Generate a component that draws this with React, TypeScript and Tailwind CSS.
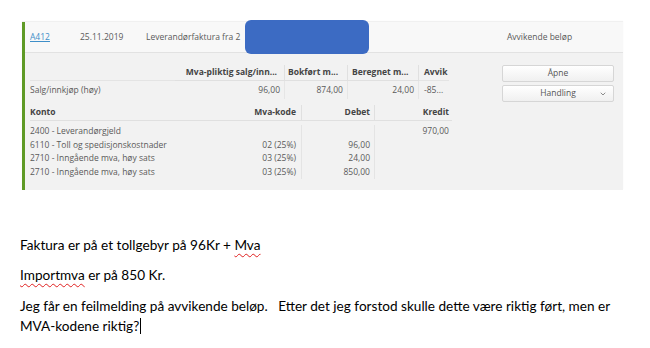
import { ChevronDown } from "lucide-react";

const postings = [
  { konto: "2400 - Leverandørgjeld", kode: "", debet: "", kredit: "970,00" },
  { konto: "6110 - Toll og spedisjonskostnader", kode: "02 (25%)", debet: "96,00", kredit: "" },
  { konto: "2710 - Inngående mva, høy sats", kode: "03 (25%)", debet: "24,00", kredit: "" },
  { konto: "2710 - Inngående mva, høy sats", kode: "03 (25%)", debet: "850,00", kredit: "" },
];

function Squiggle({ children }: { children: React.ReactNode }) {
  return (
    <span className="underline decoration-wavy decoration-[#e02020] decoration-1 underline-offset-[3px]">
      {children}
    </span>
  );
}

export default function App() {
  return (
    <div className="h-[348px] w-[650px] bg-white">
      {/* Voucher panel */}
      <div className="ml-[22px] pt-[22px]">
        <div className="relative flex h-[168px] w-[601px] flex-col border-l-[3px] border-[#5f9a26] bg-[#f2f2f2] font-['Open_Sans',sans-serif] text-[8.5px] text-[#5a5a5a] shadow-[0_-1px_1px_rgba(0,0,0,0.06)]">
          {/* Header row */}
          <div className="flex h-[31px] shrink-0 items-center border-b border-[#e2e2e2] bg-[#f8f8f8] pl-[5px]">
            <span className="w-[50px] text-[#3f8fc9] underline">A412</span>
            <span className="w-[66px]">25.11.2019</span>
            <span className="flex-1">Leverandørfaktura fra 2 </span>
            <span className="w-[116px]">Avvikende beløp</span>
          </div>
          {/* redaction box */}
          <div className="absolute left-[220px] top-[-2px] h-[34px] w-[124px] rounded-[6px] bg-[#3c6bc3]" />

          {/* Body */}
          <div className="flex flex-1 pl-[5px] pt-[12px]">
            <div className="flex flex-col">
              {/* Mva summary table */}
              <div className="grid grid-cols-[145px_110px_63px_71px_30px]">
                <div className="h-[16px] border-b border-[#e4e4e4]" />
                <div className="flex h-[16px] items-center justify-end border-b border-r border-[#e0e0e0] pr-[7px] font-bold text-[#444]">
                  Mva-pliktig salg/inn...
                </div>
                <div className="flex h-[16px] items-center border-b border-r border-[#e0e0e0] pl-[3px] font-bold text-[#444]">
                  Bokført m...
                </div>
                <div className="flex h-[16px] items-center border-b border-r border-[#e0e0e0] pl-[4px] font-bold text-[#444]">
                  Beregnet m...
                </div>
                <div className="flex h-[16px] items-center border-b border-[#e4e4e4] pl-[5px] font-bold text-[#444]">
                  Avvik
                </div>
                <div className="flex h-[18px] items-center">Salg/innkjøp (høy)</div>
                <div className="flex h-[18px] items-center justify-end border-r border-[#e6e6e6] pr-[4px]">96,00</div>
                <div className="flex h-[18px] items-center justify-end border-r border-[#e6e6e6] pr-[4px]">874,00</div>
                <div className="flex h-[18px] items-center justify-end border-r border-[#e6e6e6] pr-[4px]">24,00</div>
                <div className="flex h-[18px] items-center pl-[5px]">-85...</div>
              </div>

              {/* Posting lines */}
              <div className="mt-[6px] grid grid-cols-[220px_52px_73px_77px]">
                <div className="flex h-[16px] items-center border-b border-[#e0e0e0] font-bold text-[#444]">Konto</div>
                <div className="flex h-[16px] items-center justify-end border-b border-r border-[#e0e0e0] pr-[5px] font-bold text-[#444]">
                  Mva-kode
                </div>
                <div className="flex h-[16px] items-center justify-end border-b border-r border-[#e0e0e0] pr-[4px] font-bold text-[#444]">
                  Debet
                </div>
                <div className="flex h-[16px] items-center justify-end border-b border-[#e0e0e0] pr-[3px] font-bold text-[#444]">
                  Kredit
                </div>
                {postings.map((p, i) => (
                  <div key={i} className="contents">
                    <div className={`flex h-[13.5px] items-center ${i === 0 ? "mt-[4px]" : ""}`}>{p.konto}</div>
                    <div className={`flex h-[13.5px] items-center justify-end border-r border-[#e4e4e4] pr-[5px] ${i === 0 ? "mt-[4px]" : ""}`}>
                      {p.kode}
                    </div>
                    <div className={`flex h-[13.5px] items-center justify-end border-r border-[#e4e4e4] pr-[4px] ${i === 0 ? "mt-[4px]" : ""}`}>
                      {p.debet}
                    </div>
                    <div className={`flex h-[13.5px] items-center justify-end pr-[3px] ${i === 0 ? "mt-[4px]" : ""}`}>
                      {p.kredit}
                    </div>
                  </div>
                ))}
              </div>
            </div>

            {/* Buttons */}
            <div className="ml-[50px] flex flex-col gap-[3px]">
              <button className="flex h-[17px] w-[112px] items-center justify-center rounded-[2px] border border-[#d6d6d6] bg-gradient-to-b from-white to-[#f0f0f0] text-[#555]">
                Åpne
              </button>
              <button className="relative flex h-[17px] w-[112px] items-center justify-center rounded-[2px] border border-[#d6d6d6] bg-gradient-to-b from-white to-[#f0f0f0] text-[#555]">
                Handling
                <ChevronDown className="absolute right-[6px] h-[8px] w-[8px]" strokeWidth={2} />
              </button>
            </div>
          </div>
        </div>
      </div>

      {/* Word text */}
      <div className="ml-[20px] mt-[46px] font-['Lato',sans-serif] text-[13.6px] leading-[18px] text-black">
        <p>
          Faktura er på et tollgebyr på 96Kr + <Squiggle>Mva</Squiggle>
        </p>
        <p className="mt-[12px]">
          <Squiggle>Importmva</Squiggle> er på 850 Kr.
        </p>
        <p className="mt-[13px] whitespace-pre">
          Jeg får en feilmelding på avvikende beløp.   Etter det jeg forstod skulle dette være riktig ført, men er
          {"\n"}MVA-kodene riktig?
          <span className="ml-[1px] inline-block h-[16px] w-px translate-y-[3px] bg-black" />
        </p>
      </div>
    </div>
  );
}
